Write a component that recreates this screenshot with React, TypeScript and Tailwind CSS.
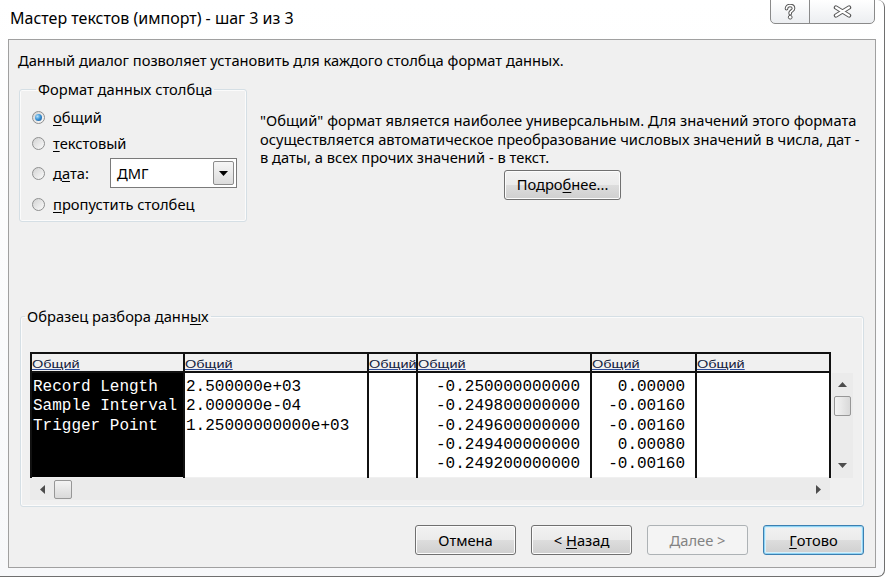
import { ReactNode } from "react";

function Radio({ checked = false }: { checked?: boolean }) {
  return (
    <span className="flex h-[13px] w-[13px] shrink-0 items-center justify-center rounded-full border border-[#8e8f8f] bg-linear-to-br from-[#d2d2d2] to-[#fbfbfb]">
      {checked && (
        <span className="h-[7px] w-[7px] rounded-full bg-[radial-gradient(circle_at_35%_35%,#b5e2fb_0%,#3c94d6_45%,#114d8c_100%)]" />
      )}
    </span>
  );
}

function GroupBox({
  title,
  className,
  children,
}: {
  title: ReactNode;
  className?: string;
  children: ReactNode;
}) {
  return (
    <fieldset
      className={`rounded-[3px] border border-[#d5dfe5] shadow-[inset_0_0_0_1px_#fbfbfb] ${className ?? ""}`}
    >
      <legend className="ml-[4px] px-[2px] leading-[20px]">{title}</legend>
      {children}
    </fieldset>
  );
}

function Button({
  children,
  width,
  variant = "normal",
}: {
  children: ReactNode;
  width: string;
  variant?: "normal" | "default" | "disabled";
}) {
  const look =
    variant === "disabled"
      ? "border-[#adb2b5] bg-[#f4f4f4] text-[#838383]"
      : variant === "default"
        ? "border-[#3c7fb1] bg-[linear-gradient(#f2f2f2_0%,#ebebeb_50%,#dddddd_50%,#cfcfcf_100%)] shadow-[inset_0_0_0_1px_#8fd4f4,inset_0_0_0_2px_#d8effa]"
        : "border-[#707070] bg-[linear-gradient(#f2f2f2_0%,#ebebeb_50%,#dddddd_50%,#cfcfcf_100%)] shadow-[inset_0_0_0_1px_#fcfcfc]";
  return (
    <div
      className={`flex h-[30px] items-center justify-center rounded-[3px] border ${look} ${width}`}
    >
      {children}
    </div>
  );
}

const columns = [
  {
    w: "w-[153px]",
    black: true,
    right: false,
    lines: ["Record Length", "Sample Interval", "Trigger Point"],
  },
  {
    w: "w-[184px]",
    black: false,
    right: false,
    lines: ["2.500000e+03", "2.000000e-04", "1.25000000000e+03"],
  },
  { w: "w-[49px]", black: false, right: false, lines: [] },
  {
    w: "w-[174px]",
    black: false,
    right: true,
    lines: [
      "-0.250000000000",
      "-0.249800000000",
      "-0.249600000000",
      "-0.249400000000",
      "-0.249200000000",
    ],
  },
  {
    w: "w-[105px]",
    black: false,
    right: true,
    lines: ["0.00000", "-0.00160", "-0.00160", "0.00080", "-0.00160"],
  },
  { w: "w-[134px]", black: false, right: false, lines: [] },
];

function Arrow({ dir }: { dir: "up" | "down" | "left" | "right" }) {
  const pts = {
    up: "0,5 4.5,0 9,5",
    down: "0,0 9,0 4.5,5",
    left: "5,0 5,9 0,4.5",
    right: "0,0 5,4.5 0,9",
  }[dir];
  const vertical = dir === "up" || dir === "down";
  return (
    <svg
      width={vertical ? 9 : 5}
      height={vertical ? 5 : 9}
      viewBox={vertical ? "0 0 9 5" : "0 0 5 9"}
    >
      <polygon points={pts} fill="#4d4d4d" />
    </svg>
  );
}

export default function App() {
  return (
    <div className="relative h-[577px] w-[886px] overflow-hidden bg-white font-['Noto_Sans',sans-serif] text-[14.7px] text-black">
      <div className="h-[577px] w-[885px] rounded-tr-[7px] rounded-br-[7px] border-r border-b border-[#6f6f6f] bg-linear-to-b from-[#ffffff] to-[#f7f8fa]">
        {/* title bar */}
        <div className="flex h-[39px] items-start">
          <div className="pl-[10px] pt-[7px] text-[16px] leading-[22px]">
            Мастер текстов (импорт) - шаг 3 из 3
          </div>
          <div className="mr-[9px] ml-auto flex h-[25px] -translate-y-px overflow-hidden rounded-b-[5px] border border-[#8a8a8a] bg-linear-to-b from-[#ffffff] to-[#eceef1]">
            <div className="flex w-[39px] items-center justify-center border-r border-[#8a8a8a]">
              <svg width="12" height="16" viewBox="0 0 12 16">
                <path
                  d="M2.5 4.8 C2.5 2.6 4 1.5 6 1.5 C8.2 1.5 9.5 2.8 9.5 4.4 C9.5 6.4 7 6.8 6.2 8.5 L6.2 9.8"
                  fill="none"
                  stroke="#5a5a5a"
                  strokeWidth="3.6"
                  strokeLinecap="round"
                />
                <path
                  d="M2.5 4.8 C2.5 2.6 4 1.5 6 1.5 C8.2 1.5 9.5 2.8 9.5 4.4 C9.5 6.4 7 6.8 6.2 8.5 L6.2 9.8"
                  fill="none"
                  stroke="#ffffff"
                  strokeWidth="1.6"
                  strokeLinecap="round"
                />
                <circle cx="6.2" cy="13.2" r="1.9" fill="#fff" stroke="#5a5a5a" strokeWidth="1" />
              </svg>
            </div>
            <div className="flex w-[64px] items-center justify-center">
              <svg width="19" height="13" viewBox="0 0 19 13">
                <path d="M3 2.5 L16 10.5 M16 2.5 L3 10.5" stroke="#5a5a5a" strokeWidth="4.4" strokeLinecap="round" />
                <path d="M3 2.5 L16 10.5 M16 2.5 L3 10.5" stroke="#ffffff" strokeWidth="2.2" strokeLinecap="round" />
              </svg>
            </div>
          </div>
        </div>

        {/* client area */}
        <div className="ml-[8px] flex h-[529px] w-[868px] flex-col border border-[#a0a0a0] bg-[#f0f0f0]">
          <div className="mt-[10px] pl-[9px] leading-[20px]">
            Данный диалог позволяет установить для каждого столбца формат данных.
          </div>

          <div className="mt-[9px] flex items-start">
            <GroupBox
              title="Формат данных столбца"
              className="ml-[10px] w-[228px] pb-[4px] pl-[12px]"
            >
              <div className="mt-[5px] flex h-[26px] items-center gap-[8px]">
                <Radio checked />
                <span>
                  <u className="underline-offset-2">о</u>бщий
                </span>
              </div>
              <div className="flex h-[26px] items-center gap-[8px]">
                <Radio />
                <span>
                  <u className="underline-offset-2">т</u>екстовый
                </span>
              </div>
              <div className="mt-[2px] flex h-[30px] items-center">
                <Radio />
                <span className="ml-[8px] w-[57px]">
                  д<u className="underline-offset-2">а</u>та:
                </span>
                <div className="flex h-[30px] w-[127px] border border-[#7a7a7a] bg-white">
                  <span className="flex-1 pl-[6px] leading-[28px]">ДМГ</span>
                  <span className="m-[2px] flex w-[21px] items-center justify-center rounded-[2px] border border-[#8c8c8c] bg-linear-to-b from-[#f6f6f6] to-[#dcdcdc]">
                    <svg width="9" height="5" viewBox="0 0 9 5">
                      <polygon points="0,0 9,0 4.5,5" fill="#000" />
                    </svg>
                  </span>
                </div>
              </div>
              <div className="mt-[3px] flex h-[26px] items-center gap-[8px]">
                <Radio />
                <span>
                  <u className="underline-offset-2">п</u>ропустить столбец
                </span>
              </div>
            </GroupBox>

            <div className="mt-[32px] ml-[13px] flex w-[600px] flex-col items-center">
              <p className="w-full leading-[18.5px] whitespace-nowrap">
                "Общий" формат является наиболее универсальным. Для значений этого формата
                <br />
                осуществляется автоматическое преобразование числовых значений в числа, дат -
                <br />
                в даты, а всех прочих значений - в текст.
              </p>
              <div className="mt-[3px] ml-[5px]">
                <Button width="w-[117px]">
                  Подро<u className="underline-offset-2">б</u>нее...
                </Button>
              </div>
            </div>
          </div>

          <GroupBox
            title={
              <>
                Образец разбора данн<u className="underline-offset-2">ы</u>х
              </>
            }
            className="mt-[84px] ml-[11px] w-[844px] pb-[6px]"
          >
            <div className="mt-[26px] ml-[9px] flex">
              <div className="flex border-t-2 border-l-2 border-[#111]">
                {columns.map((col, i) => (
                  <div key={i} className={`flex flex-col border-r-2 border-[#111] ${col.w}`}>
                    <div className="flex h-[19px] items-end overflow-hidden border-b-2 border-[#111] bg-[#f0f0f0]">
                      <span className="inline-block origin-left scale-x-[1.45] font-['Liberation_Sans',sans-serif] text-[10px] leading-[12px] text-[#14213d] underline decoration-[#2a4b9b]">
                        Общий
                      </span>
                    </div>
                    <div
                      className={`h-[104px] pt-[5px] font-['Liberation_Mono',monospace] text-[16px] leading-[19.25px] whitespace-pre ${
                        col.black ? "bg-black text-white" : "bg-white text-black"
                      } ${col.right ? "pr-[10px] text-right" : "pl-[1px]"}`}
                    >
                      {col.lines.map((l, j) => (
                        <div key={j}>{l}</div>
                      ))}
                    </div>
                  </div>
                ))}
              </div>
              <div className="mt-[21px] ml-[1px] flex h-[105px] w-[21px] flex-col items-center bg-[#ebebeb]">
                <div className="mt-[9px]">
                  <Arrow dir="up" />
                </div>
                <div className="mt-[9px] h-[20px] w-[17px] rounded-[2px] border border-[#979797] bg-linear-to-r from-[#f4f4f4] to-[#d9d9d9]" />
                <div className="mt-auto mb-[10px]">
                  <Arrow dir="down" />
                </div>
              </div>
            </div>
            <div className="ml-[9px] flex h-[22px] w-[800px] items-center bg-[#ebebeb]">
              <div className="ml-[10px]">
                <Arrow dir="left" />
              </div>
              <div className="ml-[9px] h-[19px] w-[18px] rounded-[2px] border border-[#979797] bg-linear-to-b from-[#f4f4f4] to-[#d9d9d9]" />
              <div className="mr-[9px] ml-auto">
                <Arrow dir="right" />
              </div>
            </div>
          </GroupBox>

          <div className="mt-[18px] flex justify-end gap-[15px] pr-[11px]">
            <Button width="w-[101px]">Отмена</Button>
            <Button width="w-[101px]">
              &lt; <u className="ml-[4px] underline-offset-2">Н</u>азад
            </Button>
            <Button width="w-[101px]" variant="disabled">
              Далее &gt;
            </Button>
            <Button width="w-[101px]" variant="default">
              <u className="underline-offset-2">Г</u>отово
            </Button>
          </div>
        </div>
      </div>
    </div>
  );
}
